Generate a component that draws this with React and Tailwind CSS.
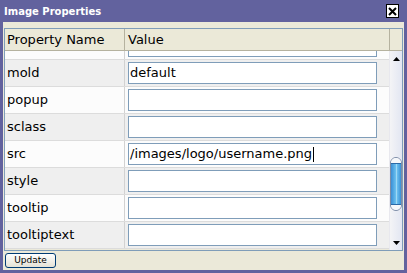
import React from "react";

const rows = [
  { name: "left", value: "" },
  { name: "mold", value: "default" },
  { name: "popup", value: "" },
  { name: "sclass", value: "" },
  { name: "src", value: "/images/logo/username.png", caret: true },
  { name: "style", value: "" },
  { name: "tooltip", value: "" },
  { name: "tooltiptext", value: "" },
];

function Arrow({ down }) {
  return (
    <svg width="7" height="4" viewBox="0 0 7 4">
      <path d={down ? "M0 0 H7 L3.5 4 Z" : "M0 4 H7 L3.5 0 Z"} fill="#000" />
    </svg>
  );
}

function PropRow({ row, odd }) {
  return (
    <div
      className={`flex h-[27px] shrink-0 border-b border-[#dcdcdc] ${
        odd ? "bg-[#efefef]" : "bg-[#fcfcfc]"
      }`}
    >
      <div className="w-[120px] shrink-0 border-r border-[#d2d2d2] pl-[2px] flex items-center text-[13px] text-black">
        {row.name}
      </div>
      <div className="flex-1 flex items-center pl-[3px] pr-[12px]">
        <div className="h-[22px] w-full border border-[#7f9db9] bg-white flex items-center px-[1px] text-[13px] text-black whitespace-nowrap">
          {row.value}
          {row.caret && <span className="ml-[1px] w-[1px] h-[15px] bg-black" />}
        </div>
      </div>
    </div>
  );
}

export default function App() {
  return (
    <div className="w-[407px] h-[273px] bg-[#62629e] flex flex-col px-[3px] pb-[3px] font-['DejaVu_Sans',sans-serif]">
      <div className="h-[22px] shrink-0 flex items-center justify-between">
        <span className="ml-[1px] text-[10px] font-bold text-white">Image Properties</span>
        <button
          type="button"
          className="mr-[5px] w-[13px] h-[14px] bg-white border border-black flex items-center justify-center"
          aria-label="Close"
        >
          <svg width="9" height="9" viewBox="0 0 9 9">
            <path d="M1 1 L8 8 M8 1 L1 8" stroke="#000" strokeWidth="2" />
          </svg>
        </button>
      </div>

      <div className="flex-1 bg-[#ebe9d9] flex flex-col pt-[6px] px-[1px]">
        <div className="h-[223px] shrink-0 border border-[#7f9db9] flex flex-col">
          <div className="h-[22px] shrink-0 flex bg-[#ebe9d8] border-b border-[#b5b29f] text-[13px] text-black">
            <div className="w-[120px] shrink-0 border-r border-[#b5b29f] pl-[2px] flex items-center">
              Property Name
            </div>
            <div className="flex-1 pl-[3px] flex items-center">Value</div>
            <div className="w-[13px] shrink-0 border-l border-[#b5b29f]" />
          </div>

          <div className="flex-1 flex overflow-hidden">
            <div className="flex-1 overflow-hidden flex flex-col">
              <div className="-mt-[18px] flex flex-col">
                {rows.map((r, i) => (
                  <PropRow key={r.name} row={r} odd={i % 2 === 1} />
                ))}
              </div>
            </div>
            <div className="w-[13px] shrink-0 flex flex-col bg-gradient-to-r from-[#f4f4f6] to-[#e2e6f2] border-l border-[#e8e8ee]">
              <div className="h-[15px] shrink-0 flex items-center justify-center">
                <Arrow />
              </div>
              <div className="flex-1 flex flex-col">
                <div className="mt-[91px] h-[54px] rounded-[6px] border border-[#7d8ca6] overflow-hidden flex flex-col">
                  <div className="h-[5px] bg-[#f6f8fb]" />
                  <div className="flex-1 flex border-y border-[#2a6aa8]">
                    <div className="flex-1 bg-gradient-to-r from-[#3b8fd6] to-[#6cc2ef]" />
                    <div className="w-[1px] bg-[#9ed8f6]" />
                    <div className="flex-1 bg-gradient-to-r from-[#6cc2ef] to-[#3b8fd6]" />
                  </div>
                  <div className="h-[5px] bg-[#f6f8fb]" />
                </div>
              </div>
              <div className="h-[15px] shrink-0 flex items-center justify-center">
                <Arrow down />
              </div>
            </div>
          </div>
        </div>

        <div className="pt-[2px] pl-[1px]">
          <button
            type="button"
            className="w-[51px] h-[15px] rounded-[3px] border border-[#003c74] bg-gradient-to-b from-white to-[#e4e2d6] text-[9px] leading-none text-black flex items-center justify-center"
          >
            Update
          </button>
        </div>
      </div>
    </div>
  );
}
